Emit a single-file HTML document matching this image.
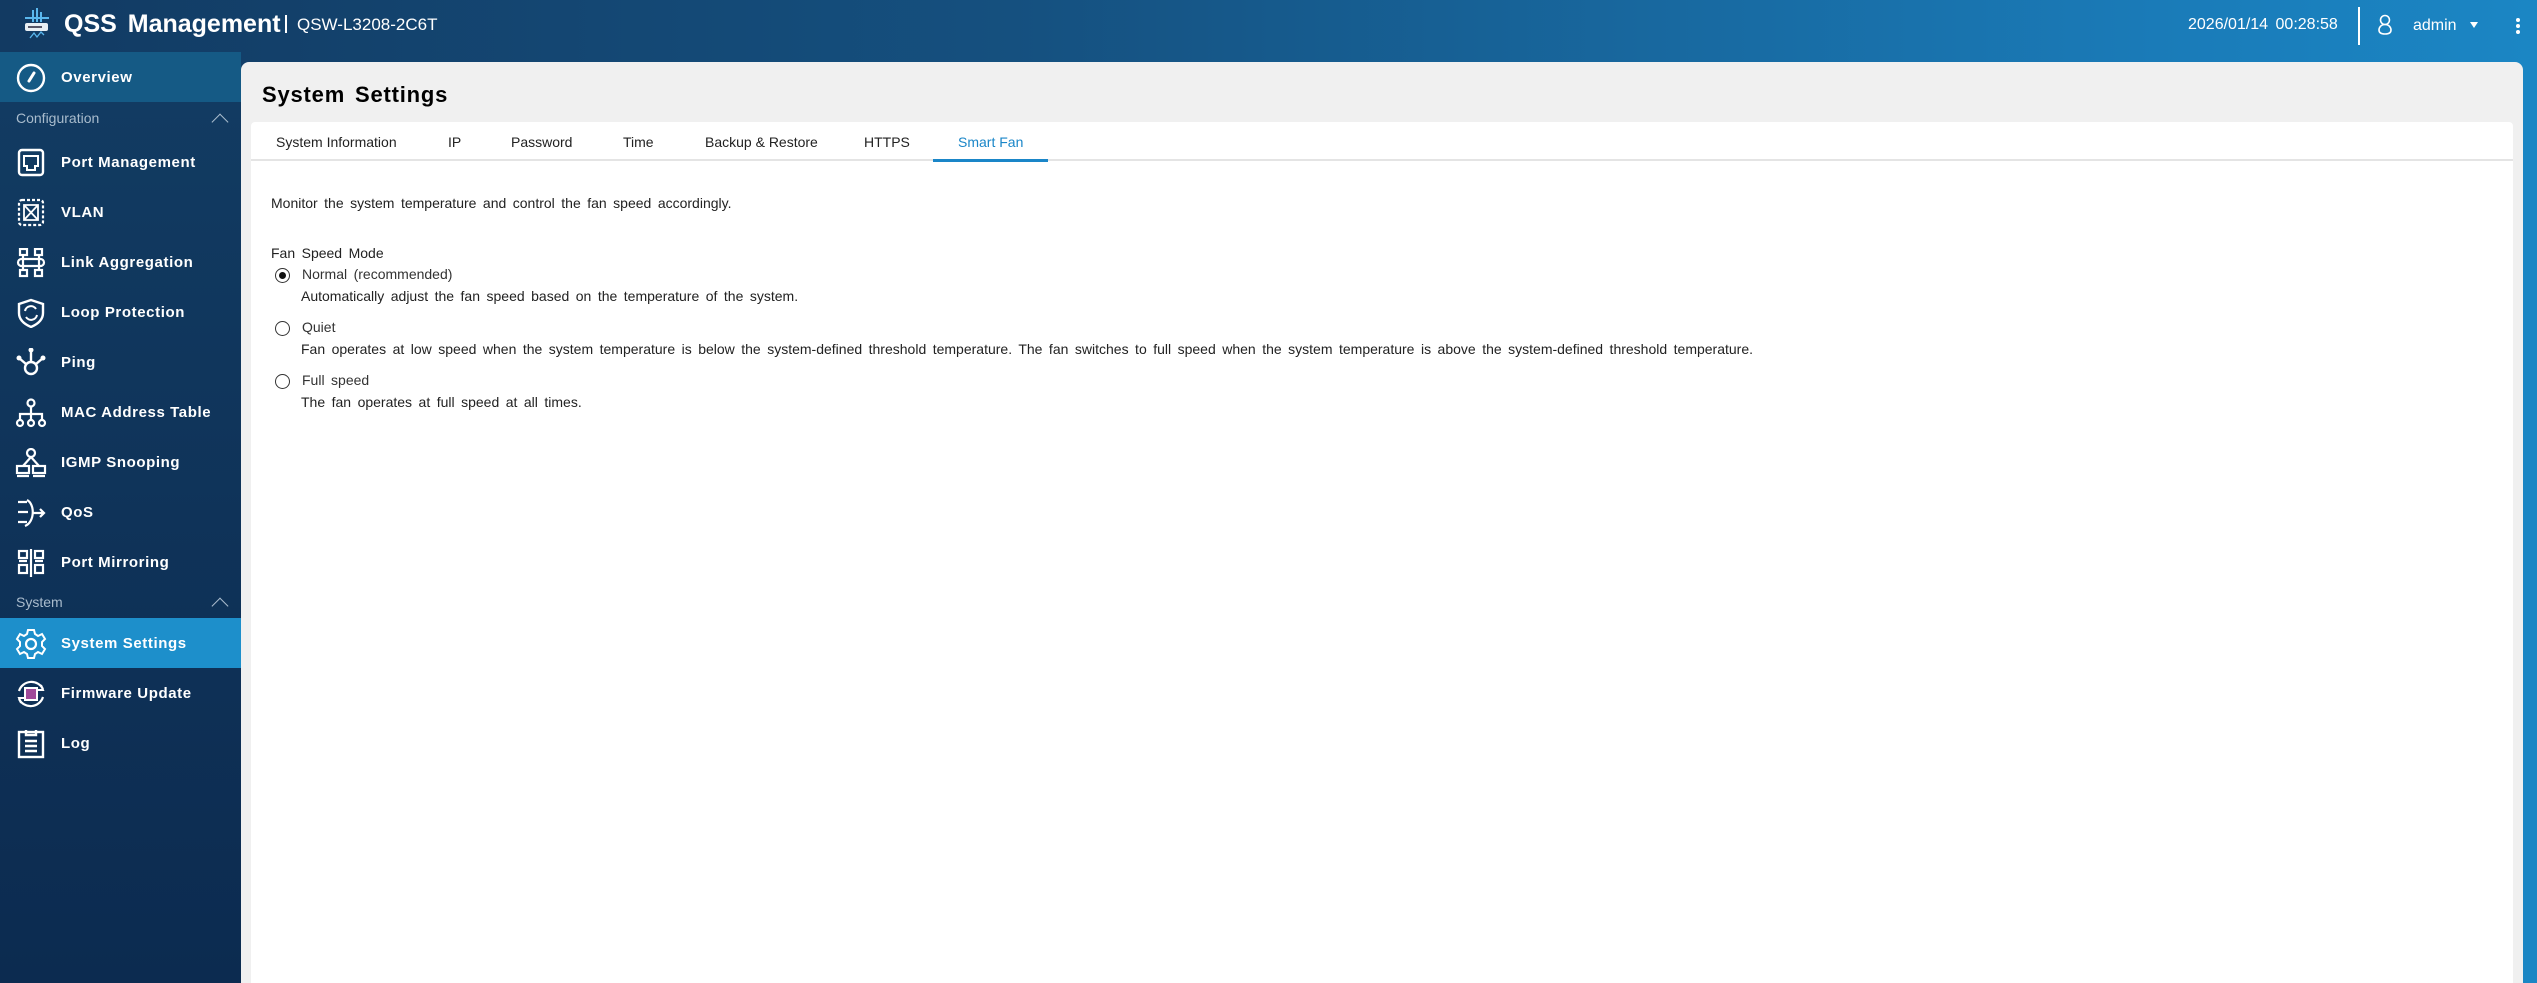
<!DOCTYPE html>
<html><head><meta charset="utf-8"><style>
*{margin:0;padding:0;box-sizing:border-box}
html{width:2537px;height:983px;overflow:hidden}
body{width:2537px;height:983px;overflow:hidden;font-family:"Liberation Sans",Arial,sans-serif;background:linear-gradient(90deg,#123a62 0%,#15507f 40%,#1a7bb8 85%,#1b86c4 100%);position:relative}
.hdr{position:absolute;left:0;top:0;width:2537px;height:52px;color:#fff}
.sb{position:absolute;left:0;top:52px;width:241px;height:931px;background:linear-gradient(180deg,#123c63 0%,#0f3359 50%,#0c2b50 100%)}
.it{position:absolute;left:0;width:241px;height:50px;color:#fff;font-weight:bold;font-size:15px;letter-spacing:0.6px}
.it span{position:absolute;left:61px;top:17px}
.it svg{position:absolute;left:15px;top:11px}
.lab{position:absolute;left:16px;color:#a9bccd;font-size:14px}
.chev{position:absolute;left:214px;width:12px;height:12px;border-left:1.5px solid #a9bccd;border-top:1.5px solid #a9bccd;transform:rotate(45deg)}
.panel{position:absolute;left:241px;top:62px;width:2282px;height:921px;background:#f0f0f0;border-radius:8px 8px 0 0;overflow:hidden}
.card{position:absolute;left:10px;top:60px;width:2262px;height:861px;background:#fff;border-radius:4px 4px 0 0}
.tabs{position:absolute;left:0;top:0;width:100%;height:39px;border-bottom:2px solid #e4e4e4}
.tab{position:absolute;top:12px;font-size:14px;color:#222}
.t{position:absolute;font-size:14px;color:#222;word-spacing:2.6px;white-space:nowrap}
.rad{position:absolute;left:24px;width:15px;height:15px;border:1.5px solid #333;border-radius:50%}
</style></head><body>
<div class="hdr">
<svg style="position:absolute;left:22px;top:8px" width="30" height="32" viewBox="0 0 30 32"><g stroke="#5ab7ee" stroke-width="2"><line x1="11" y1="2" x2="11" y2="14"/><line x1="15" y1="0" x2="15" y2="14"/><line x1="19" y1="4" x2="19" y2="14"/><line x1="3" y1="10" x2="27" y2="10"/></g><rect x="3" y="15" width="23" height="8" rx="2" fill="#e8eef3"/><rect x="6" y="18" width="14" height="2" fill="#556"/><path d="M8 30l4-5 3 4 4-5 3 3" stroke="#5ab7ee" fill="none" stroke-width="1.3"/></svg>
<div style="position:absolute;left:64px;top:10px;font-size:25px;font-weight:bold;word-spacing:4px">QSS Management</div>
<div style="position:absolute;left:285px;top:15px;width:1.5px;height:18px;background:#fff"></div>
<div style="position:absolute;left:297px;top:15px;font-size:17px">QSW-L3208-2C6T</div>
<div style="position:absolute;left:2188px;top:16px;font-size:16px;word-spacing:3px">2026/01/14 00:28:58</div>
<div style="position:absolute;left:2358px;top:7px;width:1.5px;height:38px;background:#fff"></div>
<svg style="position:absolute;left:2377px;top:14px" width="16" height="22" viewBox="0 0 16 22"><circle cx="8" cy="6" r="4.5" stroke="#fff" stroke-width="1.6" fill="none"/><path d="M8 10.5c-4 0-6 3-6 5.5s2 4 6 4s6-1.5 6-4s-2-5.5-6-5.5z" stroke="#fff" stroke-width="1.6" fill="none"/></svg>
<div style="position:absolute;left:2413px;top:17px;font-size:16px">admin</div>
<div style="position:absolute;left:2470px;top:22px;border-left:4px solid transparent;border-right:4px solid transparent;border-top:6px solid #fff"></div>
<div style="position:absolute;left:2516px;top:18px;width:4px;height:4px;border-radius:50%;background:#fff;box-shadow:0 6px 0 #fff,0 12px 0 #fff"></div>
</div>
<div class="sb">
<div class="it" style="top:0;background:#155a85"><svg width="32" height="30" viewBox="0 0 32 30"><circle cx="16" cy="15" r="13" stroke="#fff" stroke-width="2.4" fill="none"/><path d="M14 18l5-8" stroke="#fff" stroke-width="3" stroke-linecap="round"/></svg><span>Overview</span></div>
<div class="lab" style="top:58px">Configuration</div><div class="chev" style="top:64px"></div>
<div class="it" style="top:85px"><svg width="32" height="30" viewBox="0 0 32 30"><rect x="4" y="2" width="24" height="25" rx="3" stroke="#fff" stroke-width="2.4" fill="none"/><path d="M9 8h14v10h-3v4h-8v-4h-3z" stroke="#fff" stroke-width="2" fill="none"/></svg><span>Port Management</span></div>
<div class="it" style="top:135px"><svg width="32" height="30" viewBox="0 0 32 30"><rect x="4" y="2" width="24" height="25" rx="3" stroke="#fff" stroke-width="2.2" stroke-dasharray="3 2" fill="none"/><path d="M9 7l14 15M23 7L9 22M9 7h14v15H9z" stroke="#fff" stroke-width="1.8" fill="none"/></svg><span>VLAN</span></div>
<div class="it" style="top:185px"><svg width="32" height="30" viewBox="0 0 32 30"><g stroke="#fff" stroke-width="2.2" fill="none"><rect x="5" y="1" width="7" height="6"/><rect x="20" y="1" width="7" height="6"/><rect x="5" y="22" width="7" height="6"/><rect x="20" y="22" width="7" height="6"/><rect x="3" y="11" width="26" height="7" rx="3.5"/><path d="M8 7v15M24 7v15"/></g></svg><span>Link Aggregation</span></div>
<div class="it" style="top:235px"><svg width="32" height="30" viewBox="0 0 32 30"><path d="M16 2l12 4v9c0 7-5 11-12 14C9 26 4 22 4 15V6z" stroke="#fff" stroke-width="2.4" fill="none"/><path d="M10 13a6 6 0 0 1 11-2M22 17a6 6 0 0 1-11 2" stroke="#fff" stroke-width="2" fill="none"/></svg><span>Loop Protection</span></div>
<div class="it" style="top:285px"><svg width="32" height="30" viewBox="0 0 32 30"><g stroke="#fff" stroke-width="2.4" fill="none"><circle cx="16" cy="20" r="6"/><path d="M16 1v13M4 10l7 6M28 10l-7 6"/></g><circle cx="16" cy="2" r="2.5" fill="#fff"/><circle cx="4" cy="10" r="2.5" fill="#fff"/><circle cx="28" cy="10" r="2.5" fill="#fff"/></svg><span>Ping</span></div>
<div class="it" style="top:335px"><svg width="32" height="30" viewBox="0 0 32 30"><g stroke="#fff" stroke-width="2.2" fill="none"><circle cx="16" cy="5" r="3.5"/><circle cx="5" cy="25" r="3"/><circle cx="16" cy="25" r="3"/><circle cx="27" cy="25" r="3"/><path d="M16 9v13M5 22v-6h22v6"/></g></svg><span>MAC Address Table</span></div>
<div class="it" style="top:385px"><svg width="32" height="30" viewBox="0 0 32 30"><g stroke="#fff" stroke-width="2.2" fill="none"><circle cx="16" cy="5" r="4"/><path d="M16 9l-8 9M16 9l8 9"/><rect x="2" y="18" width="12" height="7"/><rect x="18" y="18" width="12" height="7"/><path d="M2 28h12M18 28h12"/></g></svg><span>IGMP Snooping</span></div>
<div class="it" style="top:435px"><svg width="32" height="30" viewBox="0 0 32 30"><g stroke="#fff" stroke-width="2.2" fill="none"><path d="M3 4h9M3 14h10M3 24h9M12 2c8 4 8 22-2 26M17 15h12M25 11l4 4-4 4"/></g></svg><span>QoS</span></div>
<div class="it" style="top:485px"><svg width="32" height="30" viewBox="0 0 32 30"><g stroke="#fff" stroke-width="2.2" fill="none"><rect x="4" y="3" width="8" height="7"/><rect x="4" y="17" width="8" height="8"/><rect x="20" y="3" width="8" height="7"/><rect x="20" y="17" width="8" height="8"/><path d="M16 1v28M4 13h8M20 13h8"/></g></svg><span>Port Mirroring</span></div>
<div class="lab" style="top:542px">System</div><div class="chev" style="top:548px"></div>
<div class="it" style="top:566px;background:#1d8fcb"><svg width="32" height="30" viewBox="0 0 32 30"><path d="M13 1h6l1 4 3 2 4-2 3 5-3 3v4l3 3-3 5-4-2-3 2-1 4h-6l-1-4-3-2-4 2-3-5 3-3v-4l-3-3 3-5 4 2 3-2z" stroke="#fff" stroke-width="2" fill="none"/><circle cx="16" cy="15" r="5" stroke="#fff" stroke-width="2.2" fill="none"/></svg><span>System Settings</span></div>
<div class="it" style="top:616px"><svg width="32" height="30" viewBox="0 0 32 30"><path d="M4 12a13 13 0 0 1 24-2M28 18a13 13 0 0 1-24 2" stroke="#fff" stroke-width="2.2" fill="none"/><path d="M26 6l2 5-5 0M6 24l-2-5 5 0" stroke="#fff" stroke-width="2" fill="none"/><rect x="10" y="9" width="12" height="12" stroke="#fff" stroke-width="2" fill="#a04a9a"/></svg><span>Firmware Update</span></div>
<div class="it" style="top:666px"><svg width="32" height="30" viewBox="0 0 32 30"><g stroke="#fff" stroke-width="2.4" fill="none"><rect x="4" y="3" width="24" height="25"/><path d="M11 1v5h10V1M10 12h12M10 17h12M10 22h12"/></g></svg><span>Log</span></div>
</div>
<div class="panel">
<div style="position:absolute;left:21px;top:20px;font-size:22px;font-weight:bold;color:#000;letter-spacing:0.8px;word-spacing:3px">System Settings</div>
<div class="card">
<div class="tabs">
<div class="tab" style="left:25px">System Information</div>
<div class="tab" style="left:197px">IP</div>
<div class="tab" style="left:260px">Password</div>
<div class="tab" style="left:372px">Time</div>
<div class="tab" style="left:454px">Backup &amp; Restore</div>
<div class="tab" style="left:613px">HTTPS</div>
<div class="tab" style="left:707px;color:#1a86c8">Smart Fan</div>
<div style="position:absolute;left:682px;top:37px;width:115px;height:3px;background:#1a86c8"></div>
</div>
<div class="t" style="left:20px;top:73px">Monitor the system temperature and control the fan speed accordingly.</div>
<div class="t" style="left:20px;top:123px">Fan Speed Mode</div>
<div class="rad" style="top:146px"><div style="position:absolute;left:2.5px;top:2.5px;width:7px;height:7px;border-radius:50%;background:#111"></div></div>
<div class="t" style="left:51px;top:144px;color:#333">Normal (recommended)</div>
<div class="t" style="left:50px;top:166px">Automatically adjust the fan speed based on the temperature of the system.</div>
<div class="rad" style="top:199px"></div>
<div class="t" style="left:51px;top:197px;color:#333">Quiet</div>
<div class="t" style="left:50px;top:219px">Fan operates at low speed when the system temperature is below the system-defined threshold temperature. The fan switches to full speed when the system temperature is above the system-defined threshold temperature.</div>
<div class="rad" style="top:252px"></div>
<div class="t" style="left:51px;top:250px;color:#333">Full speed</div>
<div class="t" style="left:50px;top:272px">The fan operates at full speed at all times.</div>
</div>
</div>
</body></html>
